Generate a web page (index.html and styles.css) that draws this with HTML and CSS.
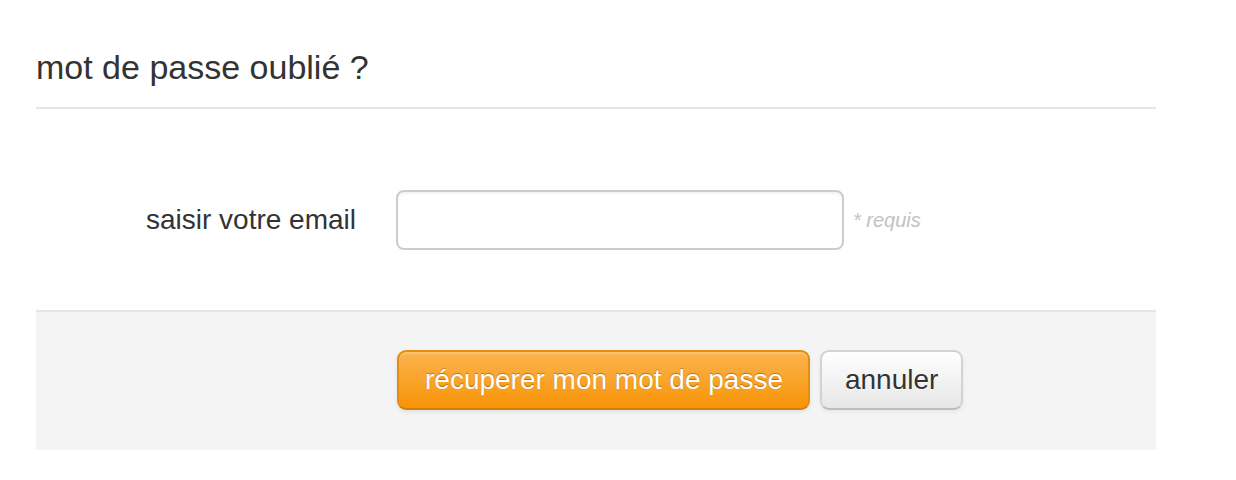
FILE: index.html
```html
<!DOCTYPE html>
<html lang="fr">
<head>
<meta charset="utf-8">
<title>mot de passe oublié ?</title>
<link rel="stylesheet" href="styles.css">
</head>
<body>
<form class="page">
  <div class="legend">mot de passe oublié ?</div>
  <div class="control-group">
    <label class="control-label" for="email">saisir votre email</label>
    <div class="controls">
      <input class="field" id="email" type="text">
      <span class="help">* requis</span>
    </div>
  </div>
  <div class="form-actions">
    <button type="button" class="btn btn-warning">récuperer mon mot de passe</button>
    <button type="button" class="btn btn-default">annuler</button>
  </div>
</form>
</body>
</html>
```
FILE: styles.css
```css
html, body {
  margin: 0;
  padding: 0;
  background: #ffffff;
}

body {
  font-family: "Liberation Sans", Arial, sans-serif;
  color: #333333;
}

.page {
  width: 1120px;
  margin: 0 0 0 36px;
  padding-top: 27px;
}

.legend {
  font-size: 34px;
  line-height: 80px;
  color: #333333;
  border-bottom: 2px solid #e5e5e5;
}

.control-group {
  display: flex;
  align-items: center;
  margin-top: 81px;
}

.control-label {
  width: 320px;
  text-align: right;
  font-size: 28px;
  line-height: 40px;
  color: #333333;
  margin-right: 40px;
}

.controls {
  display: flex;
  align-items: center;
}

.field {
  box-sizing: border-box;
  width: 448px;
  height: 60px;
  margin: 0;
  padding: 8px 12px;
  border: 2px solid #cccccc;
  border-radius: 8px;
  background: #ffffff;
  font-family: inherit;
  font-size: 28px;
  color: #555555;
  box-shadow: inset 0 2px 2px rgba(0, 0, 0, 0.05);
  outline: none;
}

.help {
  margin-left: 9px;
  font-size: 20px;
  font-style: italic;
  color: #c2c2c2;
}

.form-actions {
  margin-top: 60px;
  border-top: 2px solid #e5e5e5;
  background: #f4f4f4;
  padding: 38px 0 40px 361px;
  display: flex;
  gap: 10px;
}

.btn {
  box-sizing: border-box;
  height: 60px;
  margin: 0;
  padding: 0 23px;
  border-radius: 9px;
  font-family: inherit;
  font-size: 28px;
  line-height: 56px;
  cursor: pointer;
}

.btn-warning {
  padding: 0 25px 0 26px;
  color: #ffffff;
  text-shadow: 0 -1px 1px rgba(0, 0, 0, 0.3);
  background: linear-gradient(to bottom, #fbb450, #f89406);
  border: 2px solid #e38d13;
  border-bottom-color: #d07f0c;
  box-shadow: inset 0 2px 0 rgba(255, 255, 255, 0.2), 0 2px 4px rgba(0, 0, 0, 0.08);
}

.btn-default {
  color: #333333;
  text-shadow: 0 1px 1px rgba(255, 255, 255, 0.75);
  background: linear-gradient(to bottom, #ffffff, #e6e6e6);
  border: 2px solid #d3d3d3;
  border-bottom-color: #bdbdbd;
  box-shadow: inset 0 2px 0 rgba(255, 255, 255, 0.2), 0 2px 4px rgba(0, 0, 0, 0.06);
}
```
